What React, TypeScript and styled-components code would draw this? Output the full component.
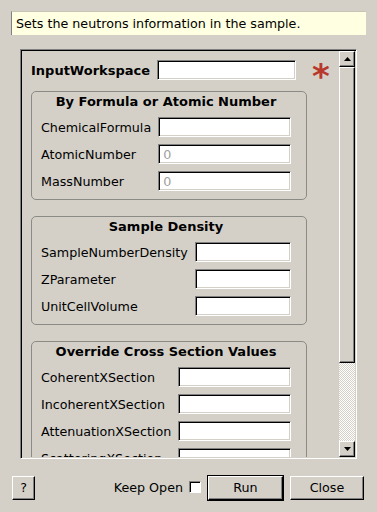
import React from 'react';
import styled, { createGlobalStyle, css } from 'styled-components';

const GlobalStyle = createGlobalStyle`
  html, body { margin: 0; padding: 0; background: #d4d0c8; }
  body {
    font-family: "DejaVu Sans", "Liberation Sans", sans-serif;
    font-size: 12.7px;
    color: #000;
  }
  * { box-sizing: border-box; }
`;

const Dialog = styled.div`
  width: 377px;
  height: 512px;
  display: flex;
  flex-direction: column;
  background: #d4d0c8;
  overflow: hidden;
`;

const Description = styled.div`
  margin: 11px 11px 0 11px;
  height: 24px;
  background: #ffffe1;
  border-left: 1px solid #808080;
  border-top: 1px solid #c8c4b8;
  padding: 0 4px;
  display: flex;
  align-items: center;
  white-space: nowrap;
`;

const ScrollFrame = styled.div`
  margin: 14px 0 0 20px;
  width: 337px;
  height: 410px;
  border: 1px solid;
  border-color: #808080 #ffffff #ffffff #808080;
  box-shadow: inset 1px 1px #000, inset -1px -1px #d4d0c8;
  padding: 1px;
  display: flex;
`;

const Viewport = styled.div`
  flex: 1;
  overflow: hidden;
  padding: 9px 0 0 9px;
  display: flex;
  flex-direction: column;
`;

const TopRow = styled.div`
  display: flex;
  align-items: center;
  height: 20px;
`;

const BoldLabel = styled.span`
  font-weight: bold;
  font-size: 13px;
  margin-right: 7px;
  white-space: nowrap;
`;

const TextInput = styled.div<{ $width?: number }>`
  height: 20px;
  ${(p) => (p.$width ? css`width: ${p.$width}px;` : css`width: 100%;`)}
  background: #fff;
  border: 1px solid;
  border-color: #808080 #ffffff #ffffff #808080;
  box-shadow: inset 1px 1px #000, inset -1px -1px #d4d0c8;
  padding: 0 4px;
  display: flex;
  align-items: center;
  color: #a0a0a0;
`;

const Required = styled.span`
  color: #b8382b;
  font-weight: bold;
  font-size: 34px;
  line-height: 1;
  align-self: flex-start;
  margin: -1px 0 0 16px;
  height: 20px;
`;

const Groups = styled.div`
  margin-top: 11px;
  width: 276px;
  display: flex;
  flex-direction: column;
  gap: 16px;
`;

const Group = styled.fieldset`
  margin: 0;
  border: 1px solid #8c8a85;
  border-radius: 5px;
  padding: 2px 15px 8px 9px;
  min-width: 0;
`;

const GroupTitle = styled.div`
  font-weight: bold;
  font-size: 13px;
  text-align: center;
  line-height: 16px;
  height: 16px;
  white-space: nowrap;
`;

const Rows = styled.div`
  margin-top: 7px;
  display: grid;
  grid-template-columns: max-content 1fr;
  column-gap: 7px;
  row-gap: 7px;
  align-items: center;
`;

const Label = styled.span`
  white-space: nowrap;
`;

const ScrollBar = styled.div`
  width: 16px;
  display: flex;
  flex-direction: column;
`;

const raised = css`
  background: #d4d0c8;
  border: 1px solid;
  border-color: #ffffff #000000 #000000 #ffffff;
  box-shadow: inset -1px -1px #808080;
`;

const ArrowButton = styled.div`
  ${raised}
  width: 16px;
  height: 16px;
  display: flex;
  align-items: center;
  justify-content: center;
`;

const Thumb = styled.div`
  ${raised}
  height: 296px;
`;

const Track = styled.div`
  flex: 1;
  background: repeating-conic-gradient(#ffffff 0 25%, #d4d0c8 0 50%) 0 0 / 2px 2px;
`;

const Footer = styled.div`
  margin-top: 15px;
  height: 27px;
  display: flex;
  align-items: center;
  padding: 0 13px 0 12px;
`;

const Button = styled.button<{ $width: number; $default?: boolean }>`
  ${raised}
  width: ${(p) => p.$width}px;
  height: 24px;
  font-family: "DejaVu Sans", "Liberation Sans", sans-serif;
  font-size: 12.7px;
  color: #000;
  padding: 0;
  ${(p) =>
    p.$default &&
    css`
      outline: 1px solid #000;
      outline-offset: 0;
    `}
`;

const Spacer = styled.div<{ $fixed?: number }>`
  ${(p) => (p.$fixed ? css`flex: 0 0 ${p.$fixed}px;` : css`flex: 1;`)}
`;

const KeepOpen = styled.label`
  display: flex;
  align-items: center;
  gap: 6px;
  margin-right: 7px;
  white-space: nowrap;
`;

const CheckBox = styled.span`
  width: 12px;
  height: 12px;
  background: #fff;
  border: 1px solid;
  border-color: #808080 #ffffff #ffffff #808080;
  box-shadow: inset 1px 1px #000;
  margin-top: -1px;
`;

const Arrow = ({ down }: { down?: boolean }) => (
  <svg width="7" height="4" viewBox="0 0 7 4">
    <polygon points={down ? '0,0 7,0 3.5,4' : '0,4 7,4 3.5,0'} fill="#000" />
  </svg>
);

type Field = { label: string; value?: string };

const groups: { title: string; fields: Field[] }[] = [
  {
    title: 'By Formula or Atomic Number',
    fields: [
      { label: 'ChemicalFormula' },
      { label: 'AtomicNumber', value: '0' },
      { label: 'MassNumber', value: '0' },
    ],
  },
  {
    title: 'Sample Density',
    fields: [
      { label: 'SampleNumberDensity' },
      { label: 'ZParameter' },
      { label: 'UnitCellVolume' },
    ],
  },
  {
    title: 'Override Cross Section Values',
    fields: [
      { label: 'CoherentXSection' },
      { label: 'IncoherentXSection' },
      { label: 'AttenuationXSection' },
      { label: 'ScatteringXSection' },
    ],
  },
];

export default function App() {
  return (
    <>
      <GlobalStyle />
      <Dialog>
        <Description>Sets the neutrons information in the sample.</Description>
        <ScrollFrame>
          <Viewport>
            <TopRow>
              <BoldLabel>InputWorkspace</BoldLabel>
              <TextInput $width={139} />
              <Required>*</Required>
            </TopRow>
            <Groups>
              {groups.map((g) => (
                <Group key={g.title}>
                  <GroupTitle>{g.title}</GroupTitle>
                  <Rows>
                    {g.fields.map((f) => (
                      <React.Fragment key={f.label}>
                        <Label>{f.label}</Label>
                        <TextInput>{f.value}</TextInput>
                      </React.Fragment>
                    ))}
                  </Rows>
                </Group>
              ))}
            </Groups>
          </Viewport>
          <ScrollBar>
            <ArrowButton>
              <Arrow />
            </ArrowButton>
            <Thumb />
            <Track />
            <ArrowButton>
              <Arrow down />
            </ArrowButton>
          </ScrollBar>
        </ScrollFrame>
        <Footer>
          <Button $width={23}>?</Button>
          <Spacer />
          <KeepOpen>
            Keep Open
            <CheckBox />
          </KeepOpen>
          <Button $width={75} $default>
            Run
          </Button>
          <Spacer $fixed={7} />
          <Button $width={74}>Close</Button>
        </Footer>
      </Dialog>
    </>
  );
}
